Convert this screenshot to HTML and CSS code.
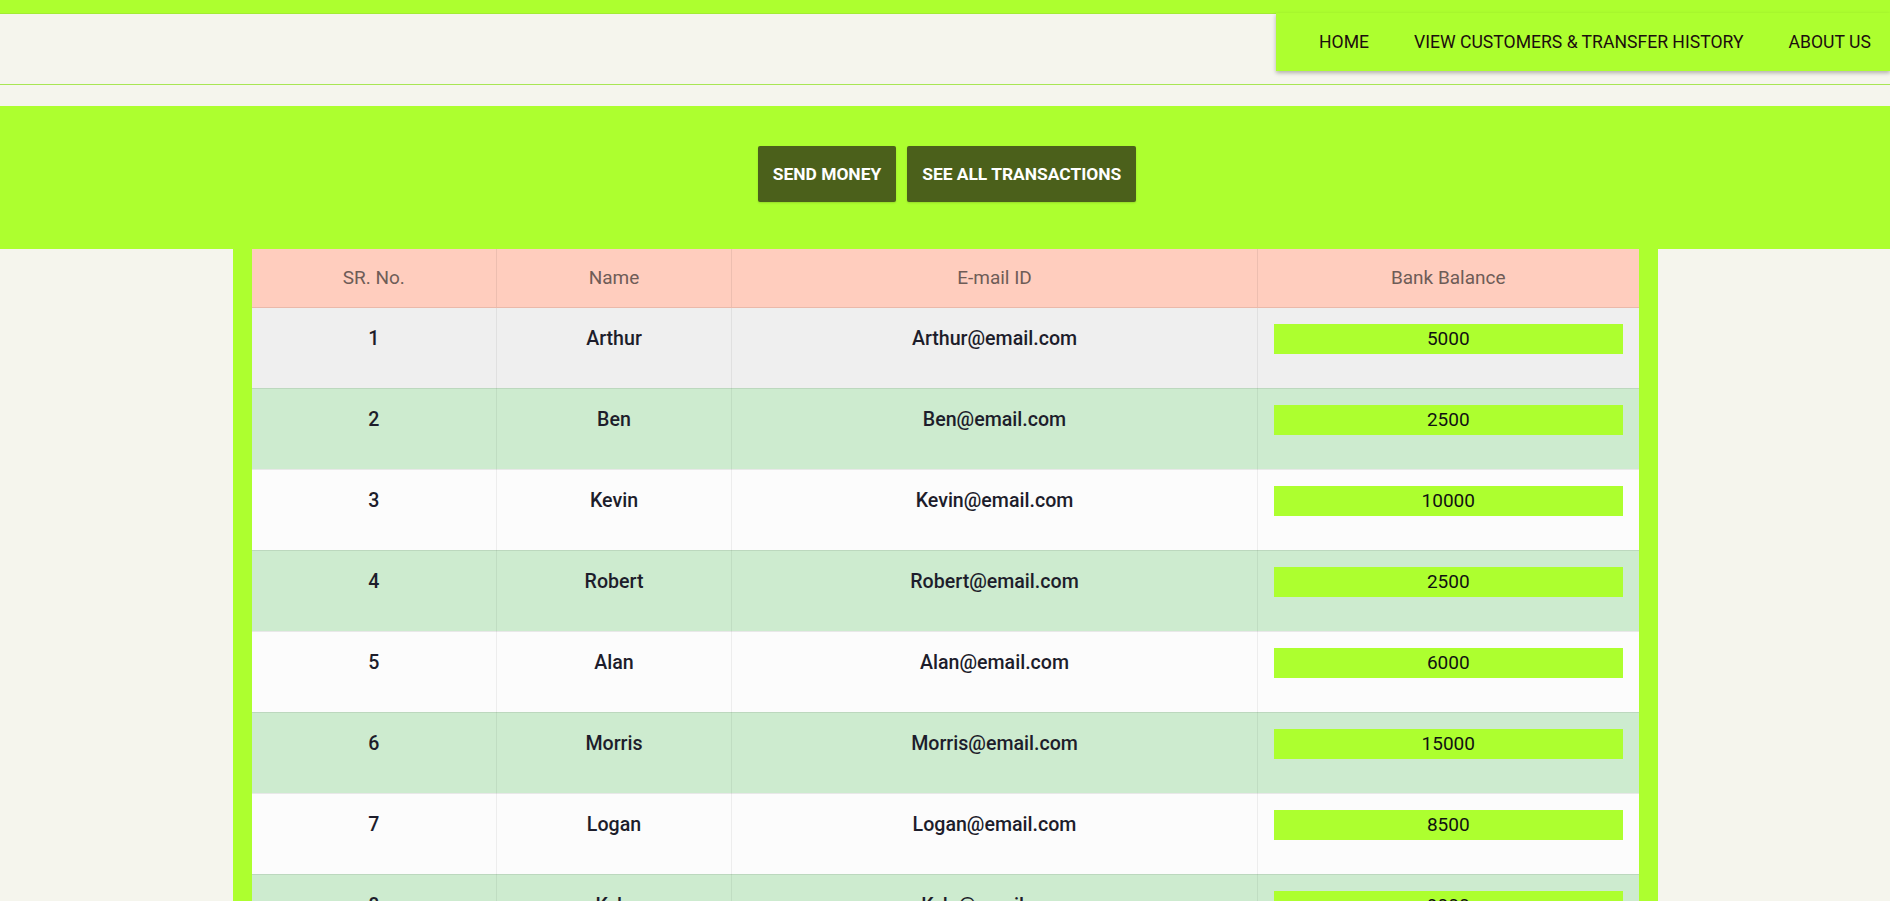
FILE: index.html
```html
<!DOCTYPE html>
<html>
<head>
<meta charset="utf-8">
<title>Bank</title>
<link rel="stylesheet" href="styles.css">
</head>
<body>
<div class="topbar"></div>
<header class="header">
  <nav class="nav">
    <a href="#">HOME</a>
    <a href="#">VIEW CUSTOMERS &amp; TRANSFER HISTORY</a>
    <a href="#">ABOUT US</a>
  </nav>
</header>
<section class="hero">
  <button class="btn">SEND MONEY</button>
  <button class="btn">SEE ALL TRANSACTIONS</button>
</section>
<main class="frame">
  <table class="customers">
    <colgroup>
      <col class="c1"><col class="c2"><col class="c3"><col class="c4">
    </colgroup>
    <thead>
      <tr><th>SR. No.</th><th>Name</th><th>E-mail ID</th><th>Bank Balance</th></tr>
    </thead>
    <tbody>
      <tr class="r-grey"><td>1</td><td>Arthur</td><td>Arthur@email.com</td><td><div class="bal">5000</div></td></tr>
      <tr class="r-green"><td>2</td><td>Ben</td><td>Ben@email.com</td><td><div class="bal">2500</div></td></tr>
      <tr class="r-white"><td>3</td><td>Kevin</td><td>Kevin@email.com</td><td><div class="bal">10000</div></td></tr>
      <tr class="r-green"><td>4</td><td>Robert</td><td>Robert@email.com</td><td><div class="bal">2500</div></td></tr>
      <tr class="r-white"><td>5</td><td>Alan</td><td>Alan@email.com</td><td><div class="bal">6000</div></td></tr>
      <tr class="r-green"><td>6</td><td>Morris</td><td>Morris@email.com</td><td><div class="bal">15000</div></td></tr>
      <tr class="r-white"><td>7</td><td>Logan</td><td>Logan@email.com</td><td><div class="bal">8500</div></td></tr>
      <tr class="r-green"><td>8</td><td>Kyle</td><td>Kyle@email.com</td><td><div class="bal">9000</div></td></tr>
      <tr class="r-white"><td>9</td><td>Henry</td><td>Henry@email.com</td><td><div class="bal">4000</div></td></tr>
      <tr class="r-green"><td>10</td><td>Oliver</td><td>Oliver@email.com</td><td><div class="bal">7000</div></td></tr>
    </tbody>
  </table>
</main>
</body>
</html>
```
FILE: styles.css
```css
* { box-sizing: border-box; }
body {
  margin: 0;
  background: #f5f5ed;
  font-family: Roboto, "Liberation Sans", sans-serif;
}
.topbar {
  height: 14px;
  background: #adff2f;
  border-bottom: 1px solid #a2ec34;
}
.header {
  height: 72px;
  margin-top: -1px;
  display: flex;
  justify-content: flex-end;
  align-items: flex-start;
  border-bottom: 1px solid #a8e653;
}
.nav {
  height: 58px;
  width: 614px;
  background: #adff2f;
  display: flex;
  align-items: center;
  padding: 0 18px 0 43px;
  gap: 45px;
  box-shadow: 0 2px 4px rgba(0,0,0,0.28);
  position: relative;
  z-index: 1;
}
.nav a {
  color: #1c0d0d;
  text-decoration: none;
  font-size: 17.6px;
  white-space: nowrap;
}
.hero {
  margin-top: 21px;
  height: 143px;
  background: #adff2f;
  display: flex;
  justify-content: center;
  align-items: flex-start;
  gap: 11px;
  padding-top: 40px;
  padding-left: 4px;
}
.btn {
  height: 56px;
  padding: 0 15px;
  border: none;
  border-radius: 2px;
  background: #4b601b;
  color: #ffffff;
  font-family: Roboto, "Liberation Sans", sans-serif;
  font-weight: 700;
  font-size: 17.4px;
  box-shadow: 0 1px 2px rgba(0,0,0,0.15);
}
.frame {
  width: 1425px;
  margin: 0 auto;
  background: #adff2f;
  padding: 0 19px;
}
.customers {
  width: 100%;
  border-collapse: collapse;
  table-layout: fixed;
}
.c1 { width: 245px; }
.c2 { width: 235px; }
.c3 { width: 526px; }
.c4 { width: 381px; }
.customers th {
  height: 58px;
  background: #ffcdbe;
  color: #6e5c57;
  font-weight: 400;
  font-size: 19px;
  text-align: center;
  border-right: 1px solid rgba(0,0,0,0.07);
  border-bottom: 1px solid #eab9aa;
}
.customers th:last-child, .customers td:last-child { border-right: none; }
.customers td {
  height: 81px;
  padding: 16px 16px 0;
  vertical-align: top;
  text-align: center;
  line-height: 30px;
  font-size: 19.6px;
  font-weight: 500;
  color: #1d1d2b;
  border-right: 1px solid rgba(0,0,0,0.06);
  border-bottom: 1px solid rgba(0,0,0,0.08);
}
.r-grey td { background: #efefef; }
.r-green td { background: #cdebcf; }
.r-white td { background: #fcfcfc; }
.customers td .bal {
  height: 30px;
  background: #adff2f;
  color: #111111;
  font-size: 19px;
  font-weight: 400;
}
```
